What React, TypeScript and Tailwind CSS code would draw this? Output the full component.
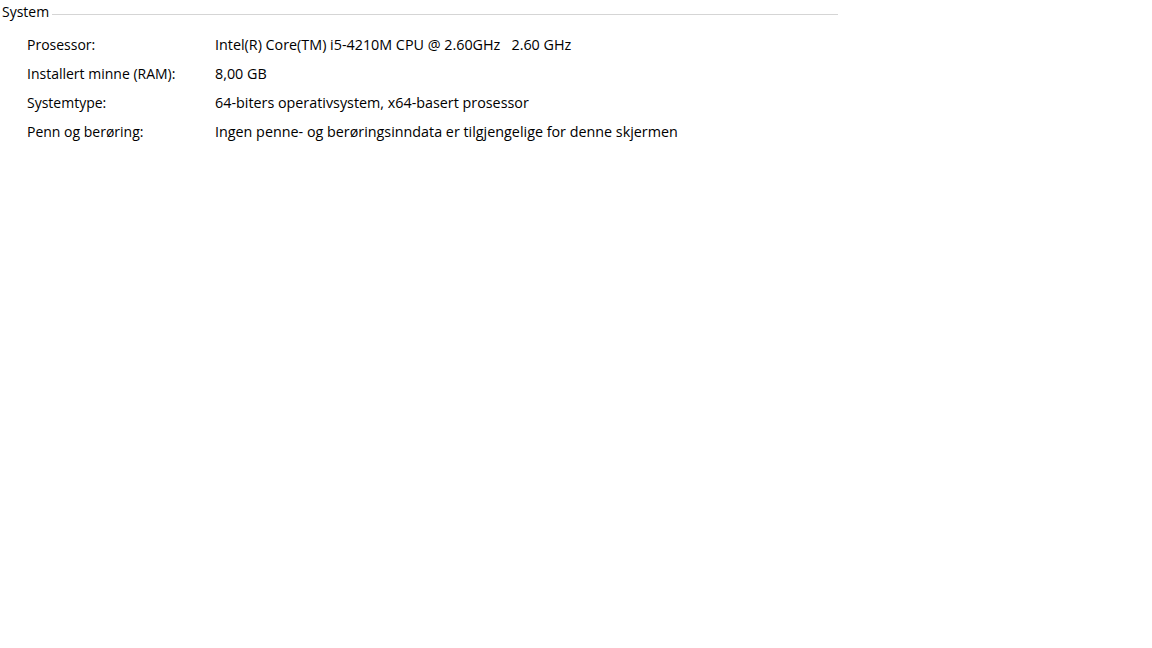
const rows = [
  ["Prosessor:", "Intel(R) Core(TM) i5-4210M CPU @ 2.60GHz\u00a0\u00a0\u00a02.60 GHz"],
  ["Installert minne (RAM):", "8,00 GB"],
  ["Systemtype:", "64-biters operativsystem, x64-basert prosessor"],
  ["Penn og berøring:", "Ingen penne- og berøringsinndata er tilgjengelige for denne skjermen"],
];

export default function App() {
  return (
    <div className="h-[648px] w-[1152px] bg-white text-[14px] text-black [font-family:'Open_Sans','Noto_Sans',sans-serif]">
      <div className="flex w-[838px] items-center pt-[2px]">
        <span className="pl-[2px] leading-[20px]">System</span>
        <div className="ml-[3px] mt-[4px] h-px flex-1 bg-[#d5d5d5]" />
      </div>
      <div className="flex flex-col pl-[27px] pt-[13px]">
        {rows.map(([label, value]) => (
          <div key={label} className="flex h-[29px] items-start leading-[20px]">
            <span className="w-[188px] shrink-0">{label}</span>
            <span className="whitespace-pre text-[14.33px]">{value}</span>
          </div>
        ))}
      </div>
    </div>
  );
}
